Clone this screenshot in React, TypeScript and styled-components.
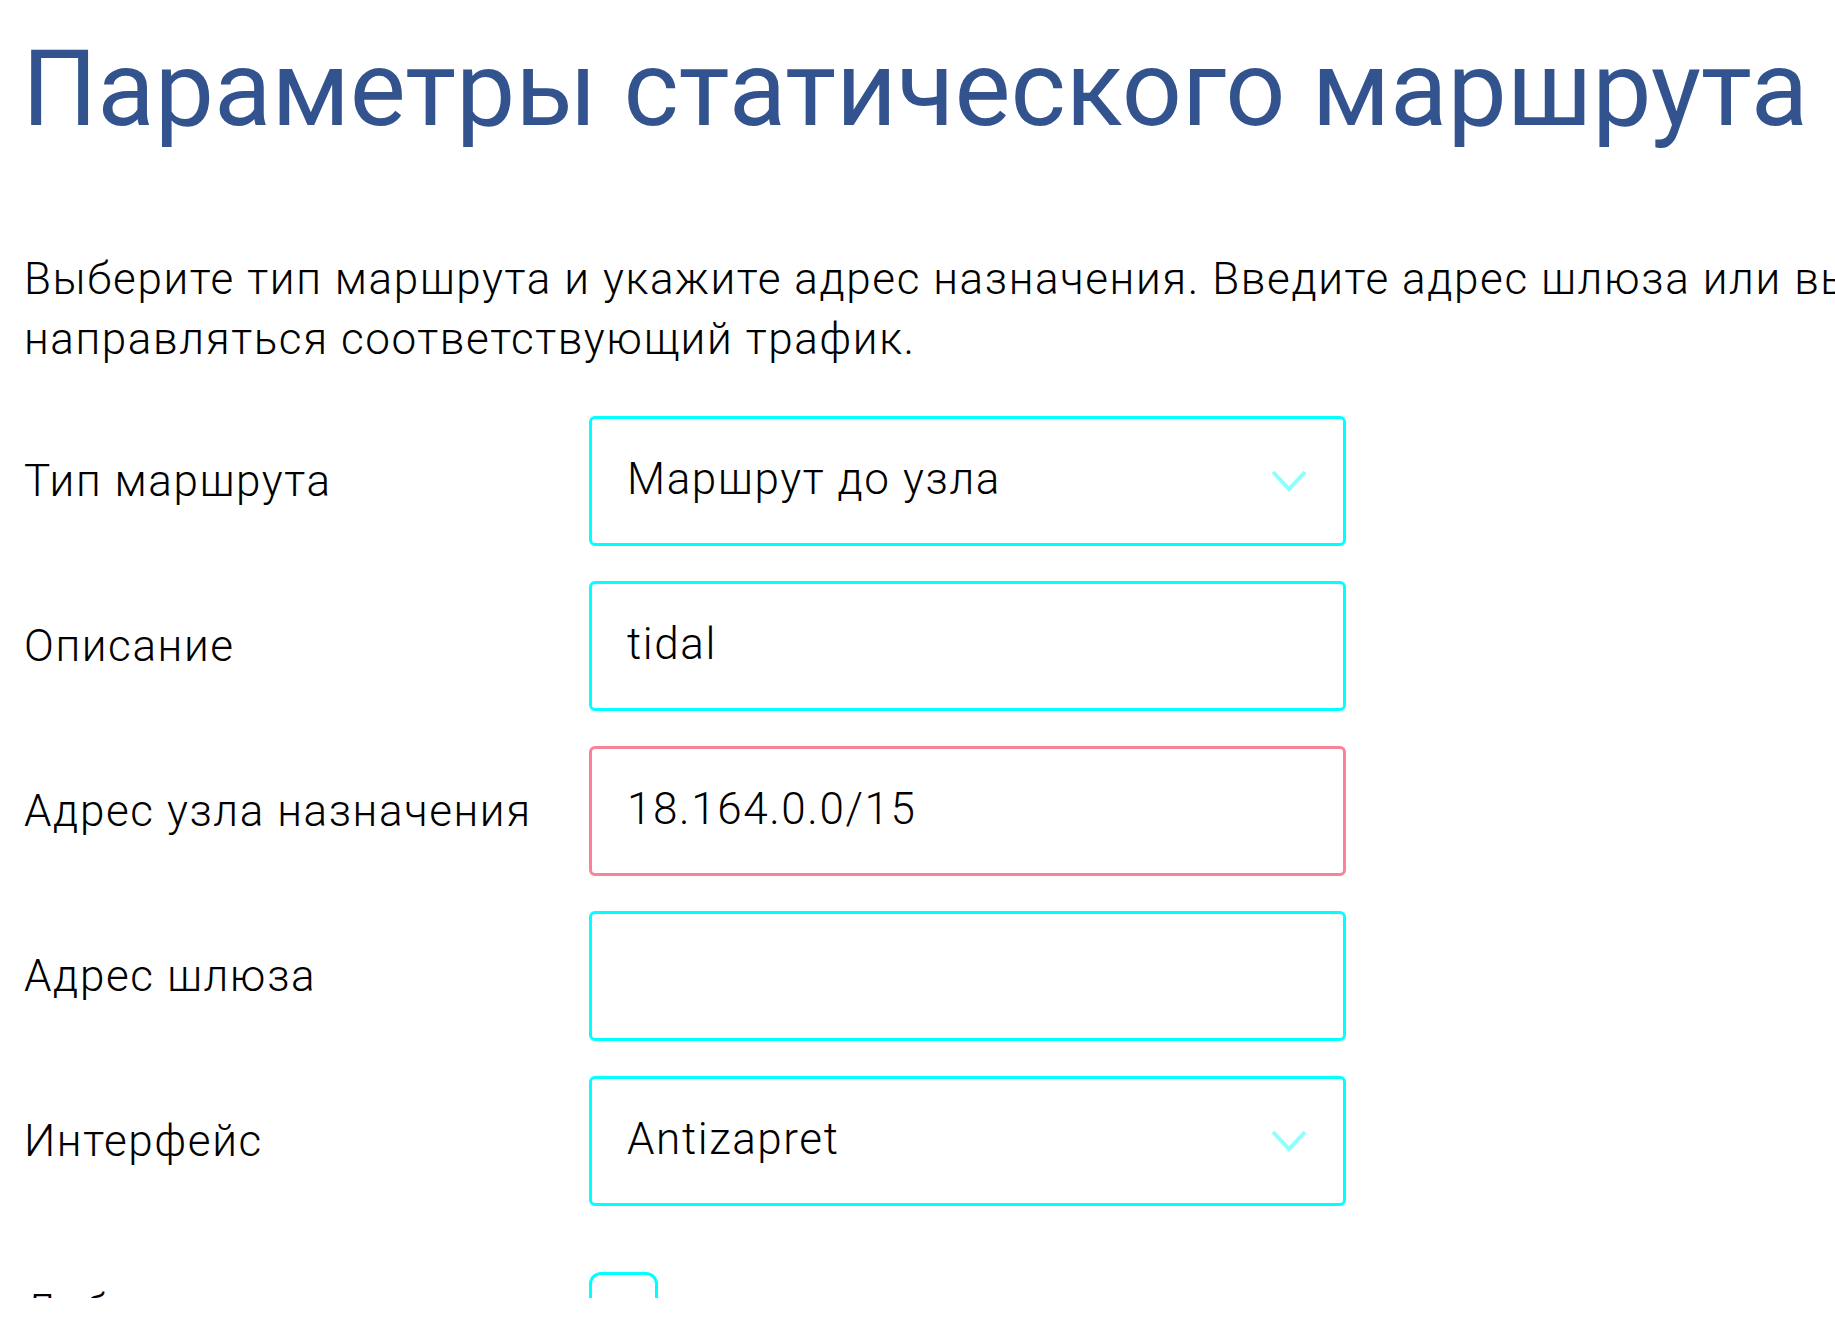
import { FC } from "react";
import styled, { createGlobalStyle } from "styled-components";

const GlobalStyle = createGlobalStyle`
  body {
    margin: 0;
    background: #fff;
    overflow: hidden;
    font-family: Roboto, "Noto Sans", sans-serif;
    color: #000;
  }
`;

const Viewport = styled.div({
  width: "100vw",
  height: 1298,
  overflow: "hidden",
});

const Page = styled.main({
  width: 3000,
  padding: "26px 0 0 24px",
});

const Title = styled.h1({
  margin: "0 0 0 -2px",
  fontSize: 105.6,
  lineHeight: "126px",
  fontWeight: 400,
  color: "#33538f",
});

const Intro = styled.p({
  margin: "97px 0 0",
  width: 2900,
  fontSize: 44,
  fontWeight: 300,
  lineHeight: "60px",
  letterSpacing: 1.6,
});

const Form = styled.div({
  marginTop: 47,
  display: "flex",
  flexDirection: "column",
  gap: 35,
});

const Row = styled.div({
  display: "flex",
  alignItems: "center",
  height: 130,
});

const Label = styled.label({
  width: 565,
  flexShrink: 0,
  fontSize: 44,
  fontWeight: 300,
  letterSpacing: 1.6,
  whiteSpace: "nowrap",
});

// checkbox row: the label sits a little lower than the box centre
const CheckRow = styled(Row)({
  "& > label": {
    paddingTop: 10,
  },
});

const Field = styled.div<{ $error?: boolean }>((p) => ({
  boxSizing: "border-box",
  width: 757,
  height: 130,
  border: `3px solid ${p.$error ? "#f8829a" : "#00ffff"}`,
  borderRadius: 6,
  display: "flex",
  alignItems: "center",
  justifyContent: "space-between",
  padding: "0 36px 0 35px",
}));

const Value = styled.span({
  fontSize: 44,
  fontWeight: 300,
  letterSpacing: 1.6,
  marginTop: -5,
});

const Check = styled.div({
  boxSizing: "border-box",
  width: 69,
  height: 68,
  border: "3px solid #00ffff",
  borderRadius: 12,
});

const Chevron: FC = () => (
  <svg width="36" height="22" viewBox="0 0 36 22" fill="none">
    <polyline
      points="2,2 18,19 34,2"
      stroke="#00ffff"
      strokeOpacity="0.45"
      strokeWidth="4"
    />
  </svg>
);

const rows: { label: string; value?: string; select?: boolean; error?: boolean }[] = [
  { label: "Тип маршрута", value: "Маршрут до узла", select: true },
  { label: "Описание", value: "tidal" },
  { label: "Адрес узла назначения", value: "18.164.0.0/15", error: true },
  { label: "Адрес шлюза" },
  { label: "Интерфейс", value: "Antizapret", select: true },
];

export default function App() {
  return (
    <Viewport>
      <GlobalStyle />
      <Page>
        <Title>Параметры статического маршрута</Title>
        <Intro>
          Выберите тип маршрута и укажите адрес назначения. Введите адрес шлюза или выберите
          интерфейс, через который должен направляться соответствующий трафик.
        </Intro>
        <Form>
          {rows.map((r) => (
            <Row key={r.label}>
              <Label>{r.label}</Label>
              <Field $error={r.error}>
                <Value>{r.value}</Value>
                {r.select && <Chevron />}
              </Field>
            </Row>
          ))}
          <CheckRow>
            <Label>Добавлять автоматически</Label>
            <Check />
          </CheckRow>
        </Form>
      </Page>
    </Viewport>
  );
}
